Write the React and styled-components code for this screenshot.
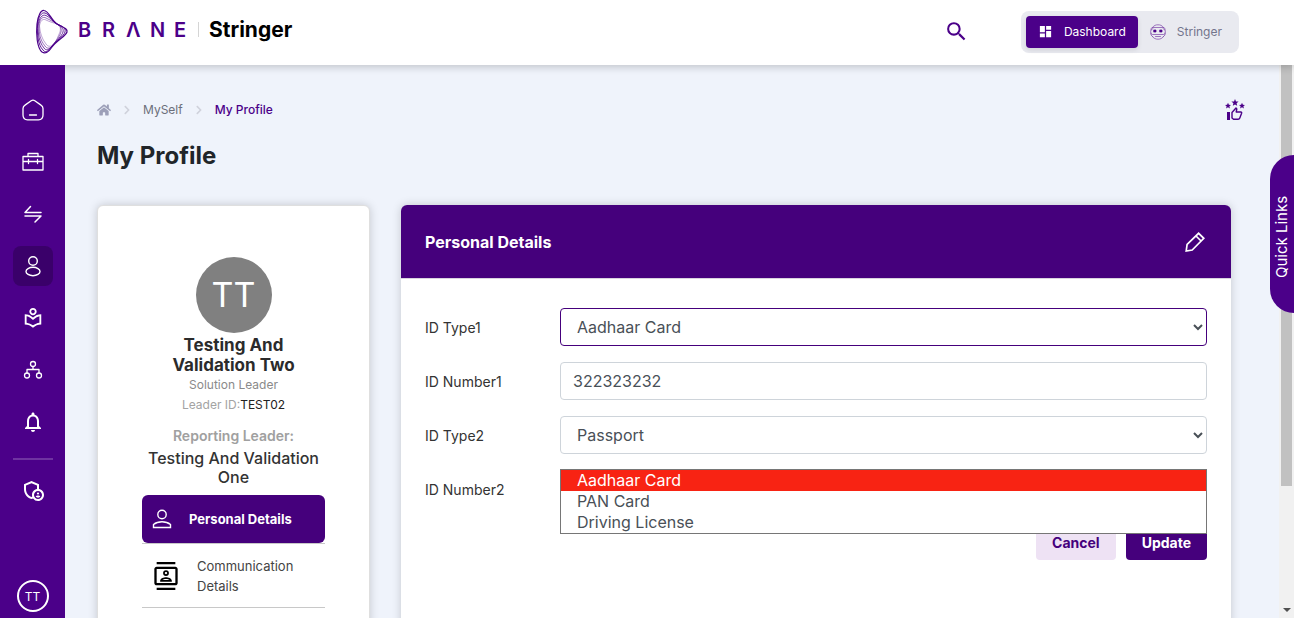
import React from "react";
import styled, { createGlobalStyle, css } from "styled-components";
import {
  MdSearch,
  MdDashboard,
  MdOutlineLocalLibrary,
  MdNotificationsNone,
  MdOutlineAdminPanelSettings,
  MdOutlineContacts,
} from "react-icons/md";
import { FaHome, FaChevronRight } from "react-icons/fa";

const color = {
  brand: "#4b0089",
  deep: "#45007c",
  page: "#eff3fb",
};

const GlobalStyle = createGlobalStyle`
  *, *::before, *::after { box-sizing: border-box; }
  body {
    margin: 0;
    overflow: hidden;
    background: ${color.page};
    color: #212529;
    font-family: Inter, "Liberation Sans", sans-serif;
    font-size: 14px;
  }
  button, input, select { font-family: inherit; margin: 0; }
  button { border: 0; padding: 0; cursor: pointer; }
  a { color: inherit; text-decoration: none; }
  svg { display: block; flex: none; }
`;

const Page = styled.div`
  display: flex;
  flex-direction: column;
  height: 100vh;
  overflow: hidden;
`;

/* Header */
const Header = styled.header`
  position: relative;
  z-index: 2;
  flex: none;
  display: flex;
  align-items: center;
  height: 65px;
  padding: 0 55px 2px 34px;
  background: #fff;
  box-shadow: 0 2px 8px rgba(0, 0, 0, 0.2);
`;
const Brand = styled.a`
  display: flex;
  align-items: center;
  margin-right: auto;
`;
const BrandName = styled.span`
  display: grid;
  grid-template-columns: repeat(5, 24px);
  margin-left: 8px;
  padding-bottom: 4px;
  color: ${color.brand};
  font-size: 20px;
  font-weight: 600;
  line-height: 28px;
`;
const BrandRule = styled.span`
  width: 1px;
  height: 15px;
  margin: 0 10px 4px 0;
  background: #d5d5d5;
`;
const ProductName = styled.span`
  padding-bottom: 4px;
  color: #000;
  font-size: 21px;
  font-weight: 700;
  line-height: 28px;
`;
const IconButton = styled.button`
  display: grid;
  place-items: center;
  background: none;
  color: ${(p) => (p.$light ? "#fff" : color.brand)};
`;
const Switcher = styled.div`
  display: flex;
  margin-left: 52px;
  padding: 5px;
  border-radius: 8px;
  background: #e9eaf0;
`;
const SwitchButton = styled.button`
  display: flex;
  align-items: center;
  gap: 11px;
  height: 32px;
  padding: 0 12px;
  border-radius: 4px;
  background: ${(p) => (p.$active ? color.brand : "transparent")};
  color: ${(p) => (p.$active ? "#fff" : "#73758c")};
  box-shadow: ${(p) => (p.$active ? "0 2px 5px rgba(0, 0, 0, 0.1)" : "none")};
  font-size: 12px;
`;

/* Sidebar */
const Body = styled.div`
  position: relative;
  flex: 1;
  min-height: 0;
  display: flex;
`;
const Sidebar = styled.nav`
  position: relative;
  z-index: 3;
  flex: none;
  display: flex;
  flex-direction: column;
  align-items: center;
  width: 65px;
  padding: 25px 0 6px;
  background: ${color.brand};
  color: #fff;
`;
const NavList = styled.div`
  display: flex;
  flex-direction: column;
  gap: 12px;
`;
const NavItem = styled.a`
  display: grid;
  place-items: center;
  width: 40px;
  height: 40px;
  border-radius: 8px;
  background: ${(p) => (p.$active ? "#3a006a" : "transparent")};
`;
const NavRule = styled.hr`
  width: 40px;
  height: 2px;
  margin: 16px 0 10px;
  border: 0;
  background: #6f33a1;
`;
const UserBadge = styled.button`
  width: 32px;
  height: 32px;
  margin-top: auto;
  border: 2px solid #fff;
  border-radius: 50%;
  background: none;
  color: #fff;
  font-size: 12px;
`;

/* Main */
const Main = styled.main`
  flex: 1;
  min-width: 0;
  overflow: hidden;
  padding: 33px 48px 0 32px;
`;
const TopRow = styled.div`
  display: flex;
  align-items: center;
  justify-content: space-between;
  height: 24px;
  margin-right: -14px;
`;
const Crumbs = styled.nav`
  display: flex;
  align-items: center;
  font-size: 12px;
  line-height: 20px;
  color: #6c6e80;
`;
const Crumb = styled.a`
  color: ${(p) => (p.$current ? color.brand : "#6c6f7a")};
  font-weight: ${(p) => (p.$current ? 500 : 400)};
`;
const CrumbArrow = styled(FaChevronRight)`
  margin: 0 11px;
  color: #d0d2dc;
`;
const PageTitle = styled.h1`
  margin: 19px 0 34px;
  font-size: 24px;
  font-weight: 700;
  line-height: 30px;
`;
const Columns = styled.div`
  display: grid;
  grid-template-columns: 273px 1fr;
  gap: 31px;
`;
const Card = styled.section`
  min-height: 560px;
  border-radius: 6px;
  background: #fff;
  box-shadow: 0 0 10px rgba(0, 0, 0, 0.18);
`;

/* Profile card */
const Profile = styled(Card)`
  display: flex;
  flex-direction: column;
  align-items: center;
  padding: 51px 44px 0;
  border: 1px solid #dfdfdf;
  text-align: center;
`;
const Avatar = styled.div`
  width: 76px;
  height: 76px;
  border-radius: 50%;
  background: #808080;
  color: #fff;
  font-size: 34px;
  line-height: 76px;
`;
const Name = styled.h2`
  margin: 2px 0 0;
  color: #2b2b2b;
  font-size: 17px;
  font-weight: 700;
  line-height: 20px;
`;
const Meta = styled.p`
  margin: 0;
  color: ${(p) => (p.$dim ? "#a3a3a3" : "#8a8a8a")};
  font-size: 12px;
  line-height: 20px;
`;
const MetaValue = styled.span`
  color: #212121;
`;
const LeaderTitle = styled.h3`
  margin: 11px 0 3px;
  color: #a0a0a0;
  font-size: 14px;
  font-weight: 600;
  line-height: 20px;
`;
const LeaderName = styled.p`
  margin: 0 0 8px;
  color: #333;
  font-size: 16px;
  font-weight: 500;
  line-height: 19px;
`;
const Tabs = styled.div`
  width: 100%;
  text-align: left;
`;
const TabSlot = styled.div`
  border-bottom: 1px solid #c8c8c8;
`;
const Tab = styled.button`
  display: flex;
  align-items: center;
  width: 100%;
  text-align: left;
  font-size: 13px;
  line-height: 20px;
  ${(p) =>
    p.$active
      ? css`
          gap: 15px;
          height: 48px;
          padding: 0 8px;
          border-radius: 6px;
          background: ${color.deep};
          color: #fff;
          font-weight: 700;
        `
      : css`
          gap: 17px;
          height: 63px;
          padding: 0 10px;
          background: none;
          color: #444;
          svg {
            color: #000;
          }
        `}
`;

/* Form card */
const CardHead = styled.div`
  display: flex;
  align-items: center;
  justify-content: space-between;
  height: 74px;
  padding: 0 24px;
  border-bottom: 1px solid #d9d3df;
  border-radius: 6px 6px 0 0;
  background: ${color.deep};
  color: #fff;
`;
const CardTitle = styled.h2`
  margin: 0;
  font-size: 16px;
  font-weight: 700;
`;
const Form = styled.form`
  display: flex;
  flex-direction: column;
  gap: 16px;
  padding: 29px 24px;
`;
const Row = styled.div`
  display: grid;
  grid-template-columns: 135px 1fr;
  align-items: center;
`;
const Label = styled.label`
  color: #333;
  font-size: 14px;
`;
const Field = styled.div`
  position: relative;
`;
const controlStyle = css`
  display: block;
  width: 100%;
  height: 38px;
  border: 1px solid ${(p) => (p.$focused ? color.deep : "#ced4da")};
  border-radius: 4px;
  background: #fff;
  color: #495057;
  font-size: 16px;
  outline: none;
`;
const Input = styled.input`
  ${controlStyle}
  padding: 0 12px;
`;
const Select = styled.select`
  ${controlStyle}
  padding: 0 0 0 12px;
`;
const OptionList = styled.ul`
  position: absolute;
  z-index: 1;
  top: calc(100% + 15px);
  left: 0;
  right: 0;
  margin: 0;
  padding: 0;
  border: 1px solid #767676;
  background: #fff;
  list-style: none;
`;
const Option = styled.li`
  padding-left: 16px;
  background: ${(p) => (p.$active ? "#f82313" : "#fff")};
  color: ${(p) => (p.$active ? "#fff" : "#495057")};
  font-size: 16px;
  line-height: 21px;
`;
const Actions = styled.div`
  display: flex;
  justify-content: flex-end;
  gap: 10px;
`;
const Action = styled.button`
  height: 36px;
  padding: 0 16px;
  border-radius: 4px;
  background: ${(p) => (p.$primary ? color.deep : "#eee2f4")};
  color: ${(p) => (p.$primary ? "#fff" : color.deep)};
  font-size: 14px;
  font-weight: 700;
`;

/* Right edge */
const ScrollTrack = styled.div`
  flex: none;
  display: flex;
  flex-direction: column;
  justify-content: space-between;
  align-items: center;
  width: 15px;
  padding-bottom: 6px;
  background: #f1f1f1;
`;
const ScrollThumb = styled.div`
  width: 11px;
  height: 77%;
  background: #c1c1c1;
`;
const ScrollArrow = styled.div`
  border: 4px solid transparent;
  border-top-color: #505050;
  border-bottom: 0;
`;
const QuickLinks = styled.button`
  position: absolute;
  z-index: 2;
  top: 90px;
  right: 0;
  width: 24px;
  height: 158px;
  padding-bottom: 6px;
  border-radius: 0 24px 24px 0;
  background: ${color.brand};
  color: #fff;
  font-size: 15px;
  line-height: 24px;
  text-align: center;
  writing-mode: vertical-rl;
  transform: rotate(180deg);
`;

/* Drawings */
const Line = ({ size = 24, width = 1.5, box = 24, children }) => (
  <svg
    width={size}
    height={size}
    viewBox={`0 0 ${box} ${box}`}
    fill="none"
    stroke="currentColor"
    strokeWidth={width}
    strokeLinecap="round"
    strokeLinejoin="round"
    aria-hidden="true"
  >
    {children}
  </svg>
);

const LogoMark = () => (
  <svg width="36" height="48" viewBox="0 0 36 48" fill="none" stroke={color.brand} aria-hidden="true">
    <path strokeWidth="1.2" d="M3 16C4 7 7 2 10 2.500C15 3 17 12 23 16C28 19 34 20 33 24C32 28 23 32 18 39C14 45 11 46 8 44C3 40 2 26 3 16Z" />
    <path strokeWidth=".9" d="M3.500 17C4 8 8 4 11 5C15 6 18 13 23 16C28 18 32 20 31 24C30 28 22 33 18 38C14 44 11 45 9 42C4 37 3 26 3.500 17Z" />
    <path strokeWidth=".8" d="M4 18C5 10 8 6 12 7.500C16 9 19 14 23 16C27 18 30 20 29 24C28 28 22 33 18 38C15 42 12 43 10 40C5 34 4 26 4 18Z" />
    <path strokeWidth=".7" opacity=".8" d="M5 18C5 11 9 8 12 10C16 12 20 14 23 16C26 18 28 20 27 24C26 28 22 33 19 37C16 41 13 41 11 38C6 32 5 25 5 18Z" />
    <path strokeWidth=".6" opacity=".6" d="M5.500 18C6 13 9 10 12 12C16 14 20 15 23 16C26 17 27 20 26 24C24 28 23 32 20 36C17 39 14 39 12 36C8 31 6 25 5.500 18Z" />
  </svg>
);

const RobotIcon = () => (
  <Line size={16} box={16} width={0.7}>
    <g stroke="#7b42a8">
      <path d="M2.500 3.500C4 1.200 6 .8 8 .8s4 .4 5.500 2.700M2.500 12.500c1 2 3.500 2.700 5.500 2.700s4.500-.7 5.500-2.700" />
      <path d="M3 3.500h10M3 4.500c-2 1-2.500 2-2.300 4 .1 1.500 1 2 2 2h10.600c1 0 1.900-.5 2-2 .2-2-.3-3-2.300-4M1 9v2l2 2M15 9v2l-2 2M5.500 12.500h5M1 6V4.500l1.500-1M15 6V4.500l-1.500-1" />
    </g>
    <rect x="4" y="6" width="2" height="2" fill={color.brand} stroke={color.brand} />
    <rect x="10" y="6" width="2" height="2" fill={color.brand} stroke={color.brand} />
  </Line>
);

const HomeIcon = () => (
  <Line width={1.3}>
    <path d="M2 10.500c0-1.500.6-2.600 2-3.400l6.200-4.400c1.200-.7 2.400-.7 3.600 0L20 7.100c1.400.8 2 1.900 2 3.400V17c0 3-1.500 4.800-4.500 4.800h-11C3.500 21.800 2 20 2 17zM8.500 17h7" />
  </Line>
);
const CaseIcon = () => (
  <Line width={1.3}>
    <path d="M2 6.500h20v13.500H2zM7 6.500v-3h10v3M2 11.500h20M7.500 9.500v4M16.500 9.500v4" />
  </Line>
);
const SwapIcon = () => (
  <Line>
    <path d="M20 10.500H4L9.500 4.500M4 14h16L14 20" />
  </Line>
);
const PersonIcon = () => (
  <Line width={1.4}>
    <circle cx="12" cy="7" r="4.300" />
    <ellipse cx="12" cy="17.500" rx="7" ry="4.200" />
  </Line>
);
const TreeIcon = () => (
  <Line width={1.3}>
    <circle cx="12" cy="6" r="2.500" />
    <circle cx="6" cy="17.500" r="2.500" />
    <circle cx="18" cy="17.500" r="2.500" />
    <path d="M12 8.500v3M6 15v-3.500h12V15" />
  </Line>
);
const FeedbackIcon = () => (
  <svg width="20" height="22" viewBox="0 0 20 22" fill="currentColor" aria-hidden="true">
    <path d="M10 0l1 2.400 2.600.2-2 1.700.6 2.500L10 5.500 7.800 6.800l.6-2.500-2-1.700L9 2.400zM3 3.800l.9 1.900 2.100.2-1.600 1.400.5 2.100L3 8.300 1.100 9.400l.5-2.100L0 5.900l2.100-.2zM17 3.800l.9 1.900 2.100.2-1.600 1.400.5 2.100L17 8.300l-1.900 1.100.5-2.100L14 5.900l2.100-.2zM2 13h3v8H2z" />
    <path fill="none" stroke="currentColor" strokeWidth="1.400" strokeLinejoin="round" d="M7 13.500L11 9l.8 1-.6 3h4.600c.8 0 1 .7.800 1.300L14.800 19c-.3.900-.8 1.300-1.600 1.300H8.500L7 19z" />
  </svg>
);
const ProfileIcon = () => (
  <Line width={1.4}>
    <circle cx="12" cy="7.500" r="4.200" />
    <path strokeLinejoin="miter" d="M3.500 20.500v-3c2.500-2 5.500-2.700 8.500-2.700s6 .7 8.500 2.700v3z" />
  </Line>
);
const PencilIcon = () => (
  <Line width={1.7}>
    <path strokeLinejoin="miter" d="M3.200 21l.9-6.500L15.600 3.300l5.200 5L9.200 20zM13 6l5.100 5" />
  </Line>
);

const navItems = [
  { label: "Home", icon: <HomeIcon /> },
  { label: "Work", icon: <CaseIcon /> },
  { label: "Transfers", icon: <SwapIcon /> },
  { label: "MySelf", icon: <PersonIcon />, active: true },
  { label: "Library", icon: <MdOutlineLocalLibrary size={22} /> },
  { label: "Organisation", icon: <TreeIcon /> },
  { label: "Notifications", icon: <MdNotificationsNone size={24} /> },
];

const options = ["Aadhaar Card", "PAN Card", "Driving License"];

export default function App() {
  return (
    <Page>
      <GlobalStyle />
      <Header>
        <Brand href="#">
          <LogoMark />
          <BrandName aria-label="BRANE">
            {["B", "R", "Λ", "N", "E"].map((letter) => (
              <span key={letter}>{letter}</span>
            ))}
          </BrandName>
          <BrandRule />
          <ProductName>Stringer</ProductName>
        </Brand>
        <IconButton type="button" aria-label="Search">
          <MdSearch size={25} />
        </IconButton>
        <Switcher>
          <SwitchButton type="button" $active>
            <MdDashboard size={15} />
            Dashboard
          </SwitchButton>
          <SwitchButton type="button">
            <RobotIcon />
            Stringer
          </SwitchButton>
        </Switcher>
      </Header>

      <Body>
        <Sidebar aria-label="Main">
          <NavList>
            {navItems.map((item) => (
              <NavItem key={item.label} href="#" aria-label={item.label} $active={item.active}>
                {item.icon}
              </NavItem>
            ))}
          </NavList>
          <NavRule />
          <NavItem href="#" aria-label="Administration">
            <MdOutlineAdminPanelSettings size={24} />
          </NavItem>
          <UserBadge type="button">TT</UserBadge>
        </Sidebar>

        <Main>
          <TopRow>
            <Crumbs aria-label="Breadcrumb">
              <Crumb href="#" aria-label="Home">
                <FaHome size={14} color="#9c9fb8" />
              </Crumb>
              <CrumbArrow size={10} />
              <Crumb href="#">MySelf</Crumb>
              <CrumbArrow size={10} />
              <Crumb href="#" $current>
                My Profile
              </Crumb>
            </Crumbs>
            <IconButton type="button" aria-label="Feedback">
              <FeedbackIcon />
            </IconButton>
          </TopRow>
          <PageTitle>My Profile</PageTitle>

          <Columns>
            <Profile>
              <Avatar>TT</Avatar>
              <Name>Testing And Validation Two</Name>
              <Meta>Solution Leader</Meta>
              <Meta $dim>
                Leader ID:<MetaValue>TEST02</MetaValue>
              </Meta>
              <LeaderTitle>Reporting Leader:</LeaderTitle>
              <LeaderName>Testing And Validation One</LeaderName>
              <Tabs>
                <TabSlot>
                  <Tab type="button" $active>
                    <ProfileIcon />
                    Personal Details
                  </Tab>
                </TabSlot>
                <TabSlot>
                  <Tab type="button">
                    <MdOutlineContacts size={28} />
                    Communication Details
                  </Tab>
                </TabSlot>
              </Tabs>
            </Profile>

            <Card>
              <CardHead>
                <CardTitle>Personal Details</CardTitle>
                <IconButton type="button" aria-label="Edit" $light>
                  <PencilIcon />
                </IconButton>
              </CardHead>
              <Form>
                <Row>
                  <Label htmlFor="type1">ID Type1</Label>
                  <Field>
                    <Select id="type1" defaultValue="Aadhaar Card" $focused>
                      {options.map((o) => (
                        <option key={o}>{o}</option>
                      ))}
                    </Select>
                  </Field>
                </Row>
                <Row>
                  <Label htmlFor="number1">ID Number1</Label>
                  <Field>
                    <Input id="number1" type="text" defaultValue="322323232" />
                  </Field>
                </Row>
                <Row>
                  <Label htmlFor="type2">ID Type2</Label>
                  <Field>
                    <Select id="type2" defaultValue="Passport">
                      <option>Passport</option>
                    </Select>
                    <OptionList>
                      {options.map((o, i) => (
                        <Option key={o} $active={i === 0}>
                          {o}
                        </Option>
                      ))}
                    </OptionList>
                  </Field>
                </Row>
                <Row>
                  <Label htmlFor="number2">ID Number2</Label>
                  <Field>
                    <Input id="number2" type="text" />
                  </Field>
                </Row>
                <Actions>
                  <Action type="button">Cancel</Action>
                  <Action type="button" $primary>
                    Update
                  </Action>
                </Actions>
              </Form>
            </Card>
          </Columns>
        </Main>

        <ScrollTrack aria-hidden="true">
          <ScrollThumb />
          <ScrollArrow />
        </ScrollTrack>
        <QuickLinks type="button">Quick Links</QuickLinks>
      </Body>
    </Page>
  );
}
